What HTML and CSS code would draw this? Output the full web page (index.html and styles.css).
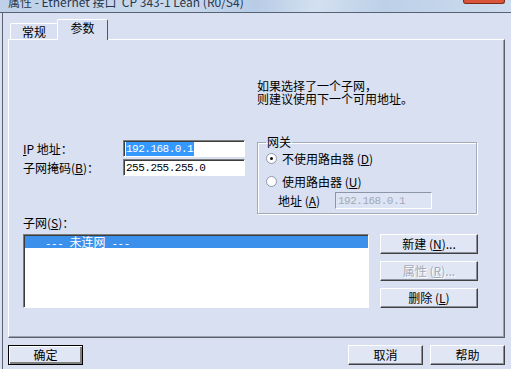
FILE: index.html
```html
<!DOCTYPE html>
<html lang="zh">
<head>
<meta charset="utf-8">
<title>属性 - Ethernet 接口</title>
<link rel="stylesheet" href="styles.css">
</head>
<body>
<div class="titlebar">
  <span class="title-text">属性 - Ethernet 接口&nbsp; CP 343-1 Lean (R0/S4)</span>
  <span class="close"></span>
</div>
<div class="frame">
  <div class="tabs">
    <div class="tab">常规</div>
    <div class="tab active">参数</div>
  </div>
  <div class="panel">
    <p class="hint">如果选择了一个子网，<br>则建议使用下一个可用地址。</p>
    <div class="mid">
      <div class="ipform">
        <span class="lbl"><u>I</u>P 地址：</span>
        <div class="field"><span class="sel">192.168.0.1</span></div>
        <span class="lbl">子网掩码(<u>B</u>)：</span>
        <div class="field">255.255.255.0</div>
      </div>
      <fieldset class="gateway">
        <legend>网关</legend>
        <div class="radio-row"><span class="radio checked"></span>不使用路由器 (<u>D</u>)</div>
        <div class="radio-row second"><span class="radio"></span>使用路由器 (<u>U</u>)</div>
        <div class="addr-row"><span class="addr-label">地址 (<u>A</u>)</span><div class="field disabled">192.168.0.1</div></div>
      </fieldset>
    </div>
    <div class="subnet-label">子网(<u>S</u>)：</div>
    <div class="subnet-row">
      <div class="listbox"><div class="list-item selected"><span class="dash">--- </span>未连网<span class="dash"> ---</span></div></div>
      <div class="side-buttons">
        <button class="btn">新建 (<u>N</u>)...</button>
        <button class="btn" disabled>属性 (<u>R</u>)...</button>
        <button class="btn">删除 (<u>L</u>)</button>
      </div>
    </div>
  </div>
  <div class="footer">
    <button class="btn btn-foot default">确定</button>
    <div class="spacer"></div>
    <button class="btn btn-foot">取消</button>
    <button class="btn btn-foot">帮助</button>
  </div>
</div>
</body>
</html>
```
FILE: styles.css
```css
* { box-sizing: border-box; }
html, body {
  margin: 0;
  width: 511px;
  height: 369px;
  overflow: hidden;
  background: #d8e0f2;
  font-family: "Noto Sans CJK SC", sans-serif;
  font-size: 12px;
  color: #000;
}
u { text-decoration: underline; text-underline-offset: 1px; }

.titlebar {
  height: 13px;
  border-bottom: 1px solid #566274;
  display: flex;
  align-items: flex-start;
  overflow: hidden;
  background: linear-gradient(100deg, #bed1e8 0%, #c9d9ec 35%, #b8cce6 50%, #d3e0f0 62%, #bcd0e8 75%, #cddcee 100%);
}
.title-text {
  margin-top: -6px;
  padding-left: 8px;
  font-size: 12px;
  line-height: 16px;
  color: #27364c;
  white-space: nowrap;
}
.close {
  margin-left: auto;
  margin-right: 6px;
  width: 42px;
  height: 4px;
  background: #d9553a;
  border: 1px solid #7d2a1a;
  border-top: none;
  border-radius: 0 0 3px 3px;
}

.frame {
  margin-left: 2px;
  border-left: 1px solid #5b6371;
  padding: 0 6px 0 5px;
  height: 356px;
}

.tabs {
  height: 26px;
  display: flex;
  align-items: flex-end;
  padding-left: 2px;
}
.tab {
  width: 48px;
  height: 16px;
  line-height: 15px;
  text-align: center;
  border-top: 1px solid #fff;
  border-left: 1px solid #fff;
  border-right: 1px solid #70767f;
  border-radius: 2px 2px 0 0;
  background: #d8e0f2;
}
.tab.active {
  position: relative;
  z-index: 1;
  width: 51px;
  height: 21px;
  margin-left: -1px;
  margin-bottom: -1px;
  line-height: 16px;
  border-right-color: #50565f;
}

.panel {
  height: 299px;
  border-top: 1px solid #fff;
  border-left: 1px solid #fff;
  border-right: 1px solid #5a5f68;
  border-bottom: 1px solid #5a5f68;
  box-shadow: inset -1px -1px 0 #9aa2b2;
  padding-left: 14px;
  display: flex;
  flex-direction: column;
}

.hint {
  margin: 39px 0 0 234px;
  line-height: 13px;
}

.mid {
  display: flex;
  align-items: flex-start;
  margin-top: 35px;
}
.ipform {
  width: 234px;
  display: grid;
  grid-template-columns: 100px 122px;
  row-gap: 2px;
  align-items: center;
}
.lbl { line-height: 12px; }

.field {
  height: 17px;
  background: #fff;
  border-top: 1px solid #7c7c7c;
  border-left: 1px solid #7c7c7c;
  border-right: 1px solid #fff;
  border-bottom: 1px solid #fff;
  box-shadow: inset 1px 1px 0 #3c3c3c;
  padding: 1px 0 0 2px;
  font-family: "Liberation Mono", monospace;
  font-size: 11px;
  letter-spacing: -0.5px;
  line-height: 14px;
  white-space: nowrap;
}
.sel {
  background: #3399ff;
  color: #fff;
  display: inline-block;
  padding-right: 1px;
}
.field.disabled {
  width: 97px;
  background: #dde4f3;
  color: #a3a9b5;
  border-color: #8d96a6 #fff #fff #8d96a6;
  box-shadow: none;
}

.gateway {
  margin: -4px 0 0 0;
  width: 220px;
  padding: 0 0 4px 8px;
  border: 1px solid #a2abba;
  box-shadow: 1px 1px 0 #fff, inset 1px 1px 0 #fff;
}
.gateway legend {
  padding: 0 1px;
  line-height: 12px;
}
.radio-row {
  display: flex;
  align-items: center;
  height: 13px;
  line-height: 13px;
  margin-top: 4px;
}
.radio-row.second { margin-top: 10px; }
.radio {
  width: 11px;
  height: 11px;
  border-radius: 50%;
  border: 1px solid #8f98a8;
  background: #fff;
  margin-right: 5px;
  display: flex;
  align-items: center;
  justify-content: center;
}
.radio.checked::after {
  content: "";
  width: 3px;
  height: 3px;
  background: #111;
  border-radius: 50%;
}
.addr-row {
  display: flex;
  align-items: center;
  margin-top: 4px;
  padding-left: 12px;
}
.addr-label { width: 57px; line-height: 12px; }

.subnet-label {
  margin-top: 3px;
  line-height: 12px;
}
.subnet-row {
  display: flex;
  align-items: flex-start;
  margin-top: 5px;
}
.listbox {
  width: 346px;
  height: 74px;
  background: #fff;
  border-top: 1px solid #7c7c7c;
  border-left: 1px solid #7c7c7c;
  border-right: 1px solid #fff;
  border-bottom: 1px solid #fff;
  box-shadow: inset 1px 1px 0 #3c3c3c;
  padding: 1px 0 0 1px;
}
.list-item {
  height: 12px;
  line-height: 12px;
  padding-left: 20px;
  white-space: pre;
}
.list-item .dash {
  font-family: "Liberation Mono", monospace;
  font-size: 11px;
  letter-spacing: -0.5px;
}
.list-item.selected {
  background: #3a90ea;
  color: #fff;
}

.side-buttons {
  margin-left: 11px;
  display: flex;
  flex-direction: column;
  gap: 7px;
}
.btn {
  width: 98px;
  height: 20px;
  padding: 0;
  font-family: inherit;
  font-size: 12px;
  line-height: 16px;
  color: #000;
  background: #e0e6f4;
  border-top: 1px solid #fff;
  border-left: 1px solid #fff;
  border-right: 1px solid #404040;
  border-bottom: 1px solid #404040;
  box-shadow: inset -1px -1px 0 #8a909c;
}
.btn:disabled {
  color: #a4aab8;
  text-shadow: 1px 1px 0 #fff;
}

.footer {
  display: flex;
  gap: 7px;
  margin-top: 7px;
}
.spacer { flex: 1; }
.btn-foot { width: 75px; }
.btn.default {
  border: 1px solid #000;
  box-shadow: inset 1px 1px 0 #fff, inset -2px -2px 0 #808080;
}
```
